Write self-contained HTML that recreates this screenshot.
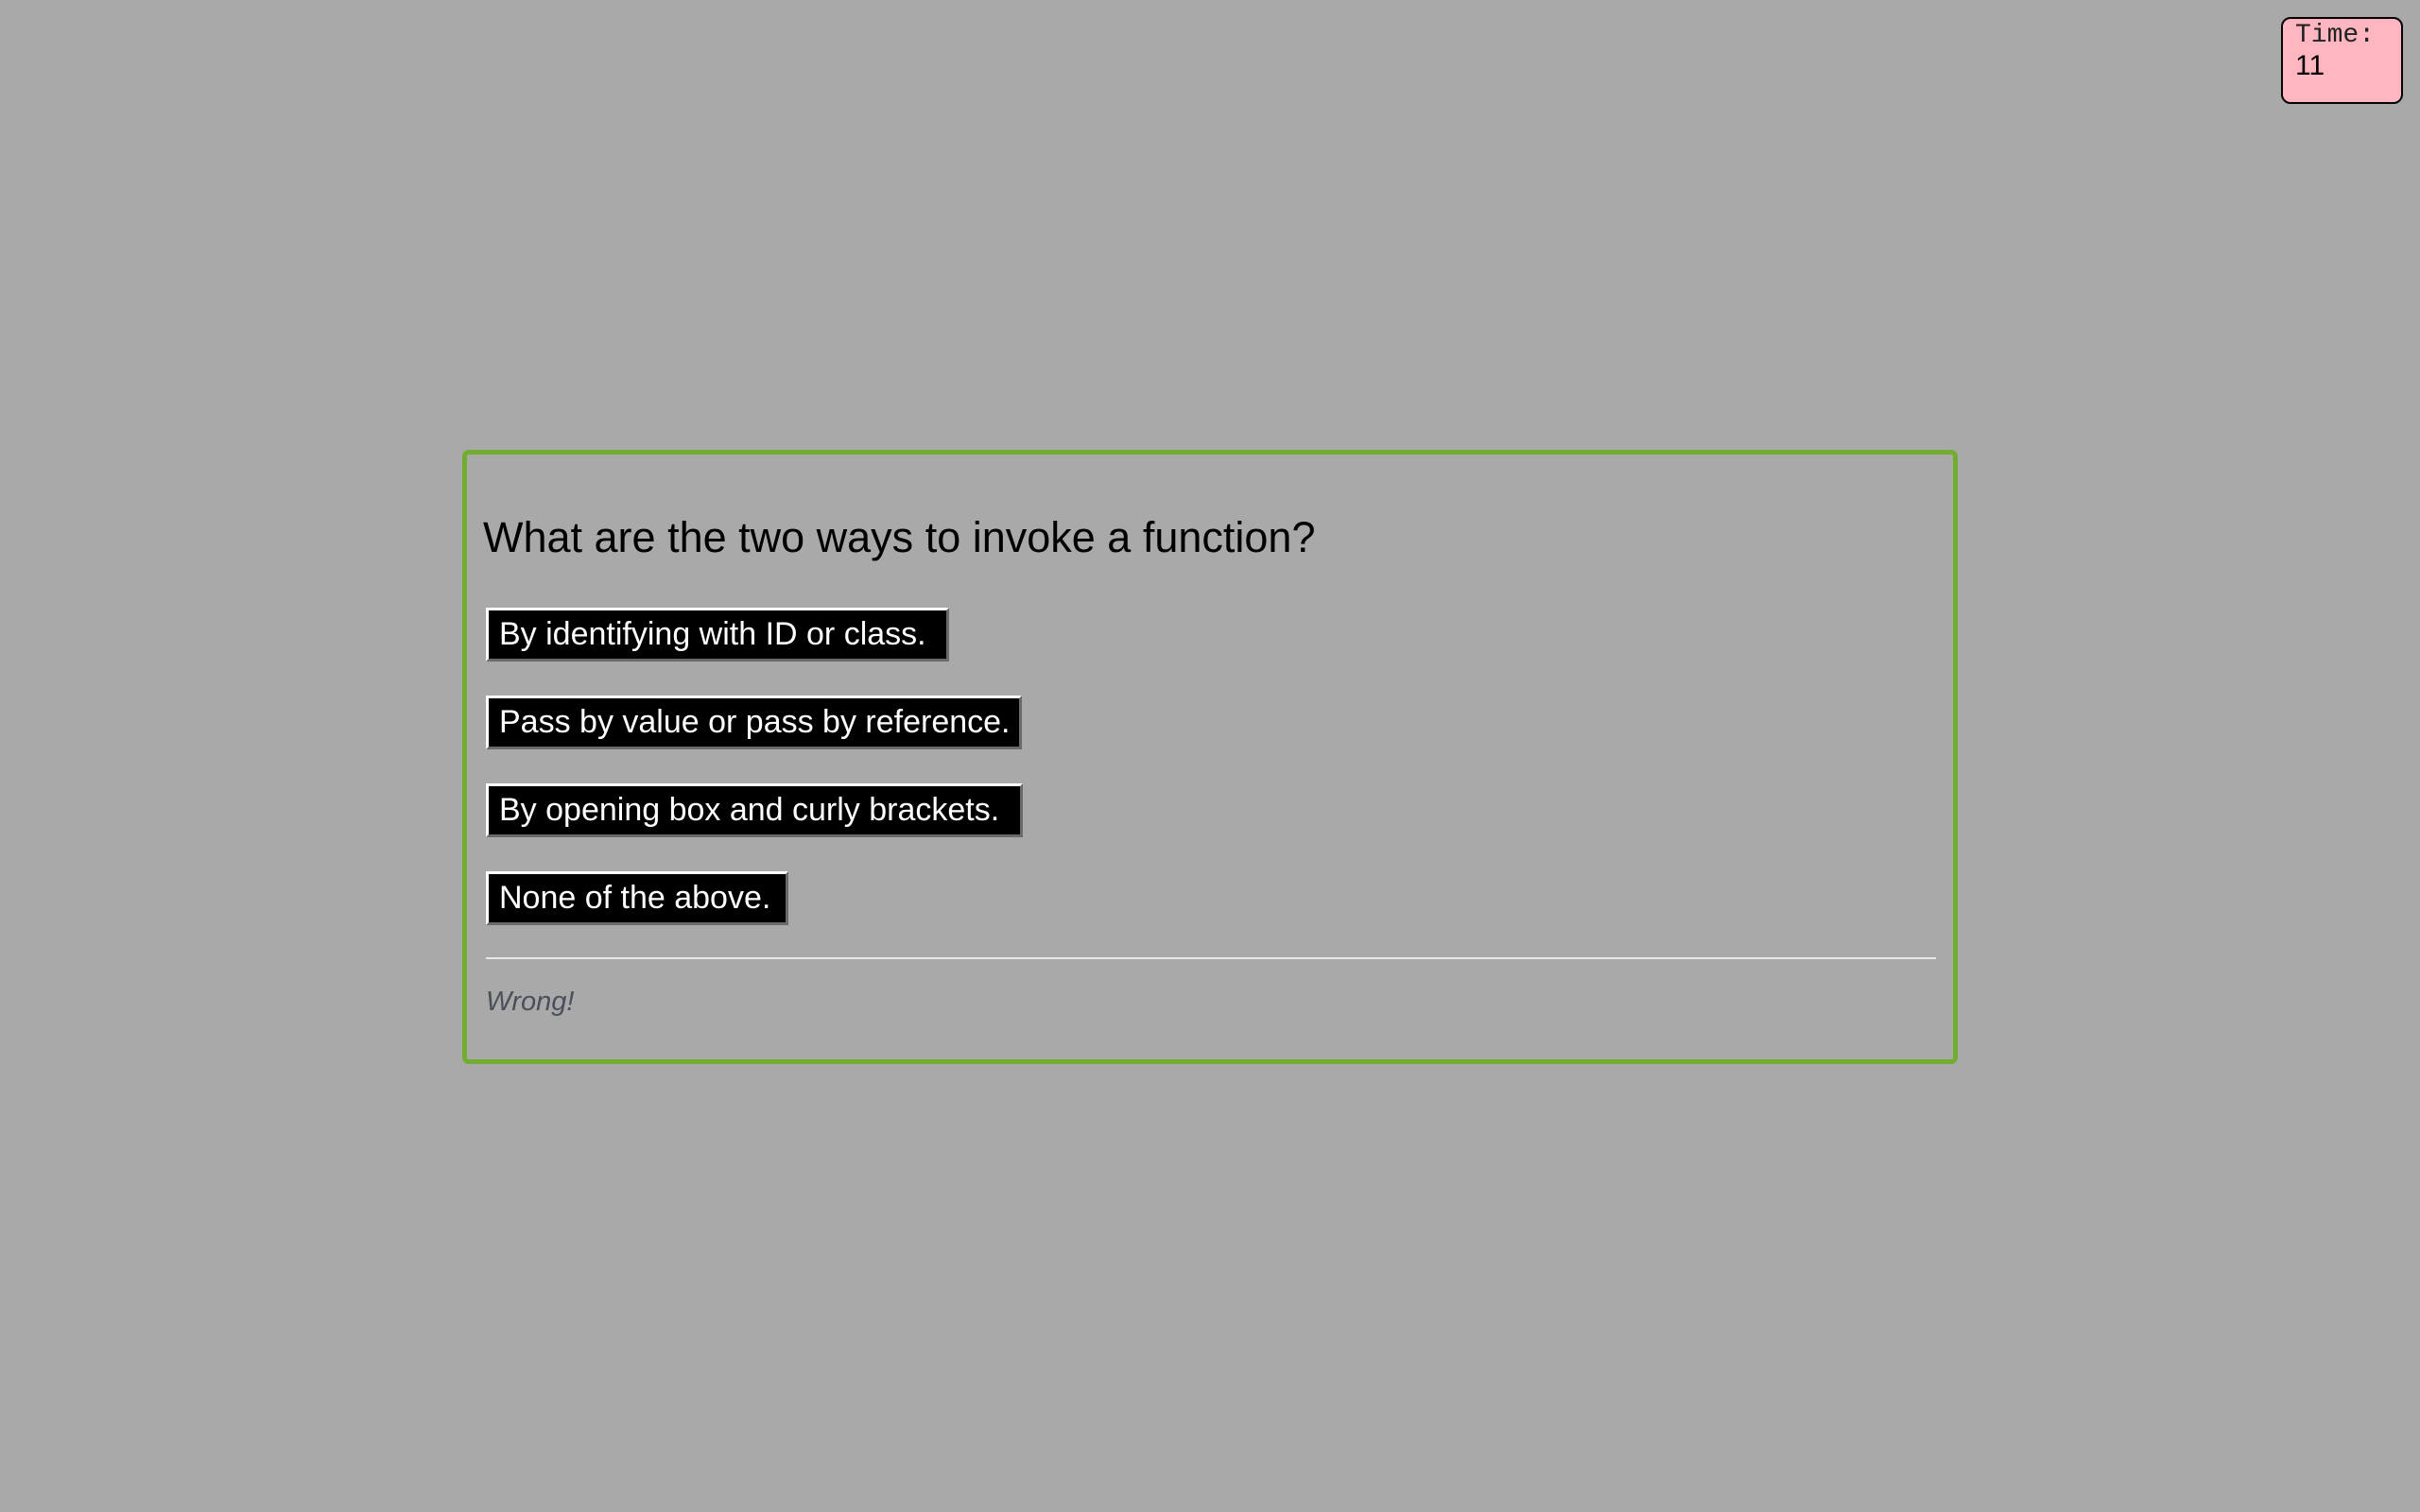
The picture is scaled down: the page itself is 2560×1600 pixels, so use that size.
<!DOCTYPE html>
<html><head><meta charset="utf-8"><style>
html,body{margin:0;padding:0}
body{width:2560px;height:1600px;background:#a9a9a9;position:relative;overflow:hidden;font-family:"Liberation Sans",Arial,sans-serif}
.timer{position:absolute;left:2413px;top:18px;width:125px;height:88px;border:2px solid #000;border-radius:10px;background:#ffb6c1;box-sizing:content-box}
.timer .t{position:absolute;left:13px;top:2px;font-family:"Liberation Mono",monospace;font-size:28px;color:#222}
.timer .n{position:absolute;left:13px;top:33px;font-size:30px;color:#000}
.card{position:absolute;left:489px;top:476px;width:1572px;height:640px;border:5px solid #72ad2f;border-radius:7px}
.q{position:absolute;left:17px;top:62px;font-size:45px;color:#000;white-space:nowrap}
.b{position:absolute;left:20px;height:57px;box-sizing:border-box;background:#000;color:#fff;font-size:34px;line-height:51px;padding-left:11px;border:3px solid;border-color:#fff #6a6a6a #6a6a6a #fff;white-space:nowrap;overflow:hidden}
.hr{position:absolute;left:20px;top:532px;width:1534px;height:2px;background:#e8e8e8}
.w{position:absolute;left:20px;top:563px;font-size:29px;font-style:italic;color:#4a4f5a}
</style></head><body>
<div class="timer"><div class="t">Time:</div><div class="n">11</div></div>
<div class="card">
<div class="q">What are the two ways to invoke a function?</div>
<div class="b" style="top:162px;width:490px">By identifying with ID or class.</div>
<div class="b" style="top:255px;width:567px">Pass by value or pass by reference.</div>
<div class="b" style="top:348px;width:568px">By opening box and curly brackets.</div>
<div class="b" style="top:441px;width:320px">None of the above.</div>
<div class="hr"></div>
<div class="w">Wrong!</div>
</div>
</body></html>
